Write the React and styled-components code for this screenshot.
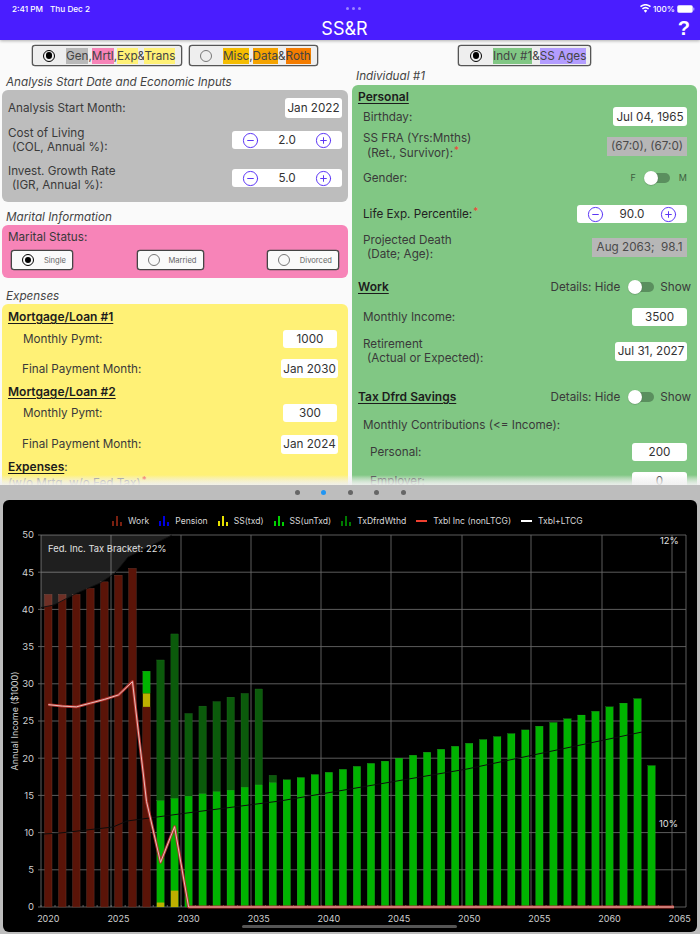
import React from "react";
import styled, { createGlobalStyle } from "styled-components";
import { CircleMinus, CirclePlus } from "lucide-react";

const Global = createGlobalStyle`
  html, body { margin: 0; padding: 0; background: #fafafa; }
  body { font-family: Inter, "Liberation Sans", sans-serif; }
  * { box-sizing: border-box; }
`;

const Page = styled.div`
  width: 700px; height: 934px; overflow: hidden; display: flex; flex-direction: column; background: #fafafa;
`;
const Header = styled.header`
  height: 40px; flex: none; background: #4a1dff; color: #fff; position: relative; z-index: 2;
  box-shadow: 0 1px 3px rgba(0,0,0,.3); display: flex; flex-direction: column;
`;
const StatusBar = styled.div`
  height: 17px; display: flex; align-items: center; justify-content: space-between; padding: 0 5px 0 12px;
  font-size: 8.2px; font-weight: 500;
`;
const StatusLeft = styled.div`display: flex; gap: 7px; width: 120px;`;
const StatusRight = styled.div`display: flex; align-items: center; gap: 2px; width: 120px; justify-content: flex-end;`;
const Grip = styled.div`display: flex; gap: 3px;`;
const GripDot = styled.i`width: 3px; height: 3px; border-radius: 50%; background: #9c86ff;`;
const TitleBar = styled.div`
  flex: 1; display: flex; align-items: center; justify-content: center; position: relative; margin-top: -1px; padding-right: 11px;
  font-size: 18px; font-weight: 400;
`;
const Help = styled.span`
  position: absolute; right: 10px; top: 0px; font-size: 20px; line-height: 24px; font-weight: 800; font-family: "Liberation Sans", sans-serif;
`;
const Top = styled.div`
  height: 445px; flex: none; display: flex; position: relative; overflow: hidden;
`;
const Fade = styled.div`
  position: absolute; left: 0; right: 0; bottom: 0; height: 10px;
  background: linear-gradient(rgba(250,250,250,0), rgba(240,240,240,.75));
`;
const Column = styled.div`
  width: 350px; flex: none; padding: 5px ${p => p.$right ? "3px" : "2px"} 0 2px; display: flex; flex-direction: column;
`;
const TabGroup = styled.div`display: flex; justify-content: center; gap: 7px;`;
const Tab = styled.div`
  height: 21px; width: ${p => p.$w}px; border: 1px solid #555; border-radius: 3px; background: #eee;
  box-shadow: 0 0 0 .3px #555; display: flex; align-items: center; padding-left: ${p => p.$pl}px; font-size: 11.7px; color: #444;
`;
const Radio = styled.span`
  width: 12px; height: 12px; border-radius: 50%; flex: none; position: relative;
  border: ${p => p.$on ? "1.7px solid #000" : "1.3px solid #777"};
  &::after { content: ""; display: ${p => p.$on ? "block" : "none"}; position: absolute; inset: 1.7px; border-radius: 50%; background: #000; }
`;
const Swatch = styled.span`background: ${p => p.$c}; padding: 1px 0; line-height: 13px;`;
const TabLabel = styled.span`margin-left: ${p => p.$ml}px; white-space: nowrap;`;
const Caption = styled.div`
  font-style: italic; font-size: 11.7px; line-height: 16px; height: 16px; color: #444; padding-left: 4px;
  margin-top: ${p => p.$mt || 0}px; margin-bottom: ${p => p.$mb || 0}px; white-space: nowrap;
`;
const Panel = styled.section`
  background: ${p => p.$bg}; border-radius: 6px; padding: ${p => p.$pt}px 0 ${p => p.$pb || 0}px;
  color: #3a3a3a; font-size: 11.7px; flex: none;
`;
const Row = styled.div`
  height: ${p => p.$h}px; margin-top: ${p => p.$mt || 0}px; display: flex; align-items: center; justify-content: space-between;
  padding: 0 ${p => p.$pr ?? 6}px 0 ${p => p.$pl ?? 6}px; white-space: nowrap; line-height: ${p => p.$lh || 14}px;
  color: ${p => p.$c || "inherit"};
`;
const Sub = styled.span`display: block; padding-left: 4px;`;
const Head = styled.span`
  font-weight: 600; text-decoration: underline; text-underline-offset: 2px; color: #1c1c1c; font-size: 12px;
`;
const Value = styled.span`
  background: ${p => p.$gray ? "#b7b7b7" : "#fff"}; height: ${p => p.$tall || 19}px; width: ${p => p.$w}px; flex: none;
  border-radius: ${p => p.$gray ? 0 : 3}px; display: flex; align-items: center; justify-content: center;
  margin-right: ${p => p.$mr || 0}px; color: ${p => p.$gray ? "#4a4a4a" : "#333"};
`;
const Stepper = styled.div`
  width: 110px; height: 18px; background: #fff; border-radius: 3px; display: flex; align-items: center; justify-content: space-between;
  padding: 0 10px; color: #333; flex: none;
`;
const StepIcon = styled.span`color: #5a35f5; display: flex;`;
const Star = styled.sup`color: #f44336; font-size: 10px; line-height: 0; vertical-align: 3px; margin-left: 1px;`;
const Choices = styled.div`display: flex; justify-content: space-between; padding: 5px 9px 0 9px;`;
const Choice = styled.div`
  width: ${p => p.$w}px; height: 20px; border: 1px solid #444; box-shadow: 0 0 0 .3px #444; border-radius: 3px; background: #fafafa;
  display: flex; align-items: center; justify-content: space-between; padding: 0 6px 0 ${p => p.$pl}px; font-size: 7.6px; color: #666;
`;
const ToggleWrap = styled.div`display: flex; align-items: center; color: ${p => p.$c || "inherit"}; font-size: ${p => p.$fs || 11.7}px;`;
const Track = styled.span`
  width: 25px; height: 10px; border-radius: 5px; background: #5a8f5e; position: relative; margin: 0 ${p => p.$mr}px 0 ${p => p.$ml}px; flex: none;
  &::after { content: ""; position: absolute; left: -1px; top: -2.5px; width: 14px; height: 14px; border-radius: 50%; background: #fff; box-shadow: 0 .5px 1px rgba(0,0,0,.3); }
`;
const Bottom = styled.div`
  flex: 1; background: #bdbdbd; display: flex; flex-direction: column; align-items: stretch;
`;
const Dots = styled.div`height: 15px; display: flex; justify-content: center; align-items: center; gap: 21.5px; flex: none; padding-top: 0;`;
const Dot = styled.i`width: 5px; height: 5px; border-radius: 50%; background: ${p => p.$on ? "#2196f3" : "#666"};`;
const Card = styled.div`
  height: 432px; margin: 0 3px; background: #000; border-radius: 6px; position: relative; display: flex; flex-direction: column; flex: none;
`;
const Legend = styled.div`
  height: 28px; flex: none; padding: 14px 0 0 109px; display: flex; align-items: center; font-size: 8.6px; color: #d8d8d8; white-space: nowrap;
`;
const LegendItem = styled.div`display: flex; align-items: center; gap: 6px; margin-right: ${p => p.$mr}px;`;
const Chart = styled.svg`display: block; flex: none;`;
const ScrollBar = styled.div`
  position: absolute; left: 239px; bottom: 4px; width: 215px; height: 3px; border-radius: 2px; background: #555;
`;

const Bars = ({ c }) => (
  <svg width="10" height="10" viewBox="0 0 10 10">
    <rect x="0" y="5" width="2" height="5" fill={c} /><rect x="4" y="0" width="2" height="10" fill={c} /><rect x="8" y="6" width="2" height="4" fill={c} />
  </svg>
);
const Dash = ({ c }) => (<svg width="11" height="4" viewBox="0 0 11 4"><rect y="1" width="11" height="2" fill={c} /></svg>);

const X0 = 48.3, DX = 14.03, Y0 = 907, DY = 7.44, BW = 7.4;
const yv = v => Y0 - v * DY;
const xv = yr => X0 + (yr - 2020) * DX;

const WORK = [42, 42, 42, 42.8, 43.7, 44.6, 45.5, 26.9];
const GREEN = [
  [2027, 28.7, 31.7, 28.7], [2028, 0.6, 14.3, 33.2], [2029, 2.2, 14.6, 36.7], [2030, 0, 14.9, 26], [2031, 0, 15.2, 27], [2032, 0, 15.5, 27.6],
  [2033, 0, 15.7, 28.2], [2034, 0, 16.1, 28.7], [2035, 0, 16.4, 29.3], [2036, 0, 16.7, 17.7],
  ...[17.1, 17.4, 17.8, 18.1, 18.5, 18.9, 19.3, 19.6, 20, 20.4, 20.8, 21.2, 21.6, 22, 22.5, 22.9, 23.3, 23.8, 24.3, 24.8, 25.3, 25.8, 26.3, 26.9, 27.4, 28, 19]
    .map((v, i) => [2037 + i, 0, v, 0]),
];
const RED = [[2020, 27.2], [2021, 27], [2022, 26.9], [2023, 27.4], [2024, 27.9], [2025, 28.5], [2026, 30.3], [2027, 14.2], [2028, 6], [2029, 10.8], [2030, 0], [2064.6, 0]];
const redPts = RED.map(([y, v]) => `${xv(y)},${yv(v)}`).join(" ");
const tenPts = "44,834 60,833 113,827 127,821 187,813 280,801 467,769 642,732";
const brPath = "M41,607.5 C52,606 60,603 77,593 L100,583 L115,573 L128,557 L172,535 L41,535 Z";

function IncomeChart() {
  const gx = [41, 111, 181, 251, 321, 391, 462, 531, 602, 672, 686];
  const years = [2020, 2025, 2030, 2035, 2040, 2045, 2050, 2055, 2060, 2065];
  return (
    <Chart width="694" height="404" viewBox="3 528 694 404">
      {gx.map(x => <line key={x} x1={x} x2={x} y1={535} y2={907} stroke="#666" strokeWidth=".9" />)}
      {[0, 5, 10, 15, 20, 25, 30, 35, 40, 45, 50].map(v => (
        <g key={v}>
          <line x1={38} x2={686} y1={yv(v)} y2={yv(v)} stroke="#666" strokeWidth=".9" />
          <text x={34} y={yv(v) + 3.3} textAnchor="end" fontSize="9.5" fill="#cfcfcf">{v}</text>
        </g>
      ))}
      {Array.from({ length: 46 }, (_, i) => <line key={i} x1={41 + i * 14.03} x2={41 + i * 14.03} y1={905} y2={907} stroke="#777" strokeWidth=".8" />)}
      {WORK.map((v, i) => (
        <rect key={i} x={xv(2020 + i) - BW / 2} y={yv(v)} width={BW} height={v * DY} fill="#5a1408" stroke="#7a4034" strokeWidth=".4" />
      ))}
      {GREEN.map(([y, a, b, c]) => (
        <g key={y}>
          {c > b && <rect x={xv(y) - BW / 2} y={yv(c)} width={BW} height={(c - b) * DY} fill="#0b5a0b" stroke="#2a7a2a" strokeWidth=".3" />}
          {c === 0 || b > a ? <rect x={xv(y) - BW / 2} y={yv(b)} width={BW} height={(b - (y === 2027 ? a : 0)) * DY} fill="#00b300" stroke="#3fbf3f" strokeWidth=".2" /> : null}
          {y === 2027 && <rect x={xv(y) - BW / 2} y={yv(28.7)} width={BW} height={1.8 * DY} fill="#bdb000" />}
          {y !== 2027 && a > 0 && <rect x={xv(y) - BW / 2} y={yv(a)} width={BW} height={a * DY} fill="#bdb000" />}
        </g>
      ))}
      <path d={brPath} fill="rgba(255,255,255,.12)" />
      <polyline points="41,607.5 54,605 77,593 100,583 115,573 128,557 172,535" fill="none" stroke="#111" strokeWidth=".9" />
      <polyline points={tenPts} fill="none" stroke="#0c0c0c" strokeWidth="1" />
      <polyline points={redPts} fill="none" stroke="#b5322c" strokeWidth="2.8" strokeLinejoin="round" />
      <polyline points={redPts} fill="none" stroke="#e6c0bc" strokeWidth="1" strokeLinejoin="round" />
      {years.map(y => (
        <text key={y} x={xv(y)} y={921.5} textAnchor="middle" fontSize="9" fill="#cfcfcf">{y}</text>
      ))}
      <text transform="translate(18 721) rotate(-90)" textAnchor="middle" fontSize="9" fill="#d0d0d0">Annual Income ($1000)</text>
      <text x="48" y="551.5" fontSize="9.4" fill="#e0e0e0">Fed. Inc. Tax Bracket: 22%</text>
      <text x="660" y="544" fontSize="9.4" fill="#e0e0e0">12%</text>
      <text x="659" y="827" fontSize="9.4" fill="#e0e0e0">10%</text>
    </Chart>
  );
}

const Step = ({ v }) => (
  <Stepper>
    <StepIcon><CircleMinus size={17} strokeWidth={1.4} /></StepIcon>
    <span>{v}</span>
    <StepIcon><CirclePlus size={17} strokeWidth={1.4} /></StepIcon>
  </Stepper>
);

const Details = () => (
  <ToggleWrap>Details: Hide<Track $ml={9} $mr={6} />Show</ToggleWrap>
);

export default function App() {
  return (
    <Page>
      <Global />
      <Header>
        <StatusBar>
          <StatusLeft><span>2:41 PM</span><span>Thu Dec 2</span></StatusLeft>
          <Grip><GripDot /><GripDot /><GripDot /></Grip>
          <StatusRight>
            <svg width="11" height="9" viewBox="0 0 22 17" fill="#fff"><path d="M11 17l3.4-4.2a5 5 0 0 0-6.8 0zM5.8 10.6a8 8 0 0 1 10.4 0l2-2.4a11 11 0 0 0-14.4 0zM2 6a13.5 13.5 0 0 1 18 0l2-2.4A16.5 16.5 0 0 0 0 3.6z" /></svg>
            <span>100%</span>
            <svg width="18" height="8" viewBox="0 0 18 8"><rect x=".3" y=".3" width="15.4" height="7.4" rx="2" fill="#fff" stroke="#cfc6ff" strokeWidth=".5" /><rect x="16.3" y="2.5" width="1" height="3" rx=".5" fill="#bfb3ff" /></svg>
          </StatusRight>
        </StatusBar>
        <TitleBar>SS&amp;R<Help>?</Help></TitleBar>
      </Header>
      <Top>
        <Column>
          <TabGroup>
            <Tab $w={150} $pl={10}>
              <Radio $on />
              <TabLabel $ml={11}><Swatch $c="#b9b9b9">Gen</Swatch>,<Swatch $c="#f784b8">Mrtl</Swatch>,<Swatch $c="#fff176">Exp</Swatch>&amp;<Swatch $c="#fff176">Trans</Swatch></TabLabel>
            </Tab>
            <Tab $w={129} $pl={10}>
              <Radio />
              <TabLabel $ml={11}><Swatch $c="#f5bd02">Misc</Swatch>,<Swatch $c="#f5a300">Data</Swatch>&amp;<Swatch $c="#f57c00">Roth</Swatch></TabLabel>
            </Tab>
          </TabGroup>
          <Caption $mt={8}>Analysis Start Date and Economic Inputs</Caption>
          <Panel $bg="#bdbdbd" $pt={8} $pb={5}>
            <Row $h={20}>Analysis Start Month:<Value $w={57} $tall={20}>Jan 2022</Value></Row>
            <Row $h={38} $mt={3}><span>Cost of Living<Sub>(COL, Annual %):</Sub></span><Step v="2.0" /></Row>
            <Row $h={38}><span>Invest. Growth Rate<Sub>(IGR, Annual %):</Sub></span><Step v="5.0" /></Row>
          </Panel>
          <Caption $mt={7}>Marital Information</Caption>
          <Panel $bg="#f784b8" $pt={4} $pb={8}>
            <Row $h={16}>Marital Status:</Row>
            <Choices>
              <Choice $w={62} $pl={10}><Radio $on />Single</Choice>
              <Choice $w={67} $pl={10}><Radio />Married</Choice>
              <Choice $w={72} $pl={10}><Radio />Divorced</Choice>
            </Choices>
          </Panel>
          <Caption $mt={10}>Expenses</Caption>
          <Panel $bg="#fff176" $pt={5}>
            <Row $h={16}><Head>Mortgage/Loan #1</Head></Row>
            <Row $h={27} $pl={21} $pr={11}>Monthly Pymt:<Value $w={54} $tall={18}>1000</Value></Row>
            <Row $h={33} $pl={20} $pr={10}>Final Payment Month:<Value $w={57}>Jan 2030</Value></Row>
            <Row $h={14}><Head>Mortgage/Loan #2</Head></Row>
            <Row $h={28} $pl={21} $pr={11}>Monthly Pymt:<Value $w={54} $tall={18}>300</Value></Row>
            <Row $h={34} $pl={20} $pr={10}>Final Payment Month:<Value $w={57}>Jan 2024</Value></Row>
            <Row $h={12}><span><Head>Expenses</Head>:</span></Row>
            <Row $h={20} $c="#777"><span>(w/o Mrtg, w/o Fed Tax)<Star>*</Star></span></Row>
          </Panel>
          <Fade />
        </Column>
        <Column $right>
          <TabGroup>
            <Tab $w={133} $pl={11}>
              <Radio $on />
              <TabLabel $ml={11}><Swatch $c="#81c784">Indv #1</Swatch>&amp;<Swatch $c="#b39dff">SS Ages</Swatch></TabLabel>
            </Tab>
          </TabGroup>
          <Caption $mt={2} $mb={1}>Individual #1</Caption>
          <Panel $bg="#81c784" $pt={4}>
            <Row $h={16}><Head>Personal</Head></Row>
            <Row $h={23} $pl={11} $pr={10}>Birthday:<Value $w={74}>Jul 04, 1965</Value></Row>
            <Row $h={36} $pl={11} $pr={10} $lh={15}><span>SS FRA (Yrs:Mnths)<Sub>(Ret., Survivor):<Star>*</Star></Sub></span><Value $gray $w={80}>(67:0), (67:0)</Value></Row>
            <Row $h={28} $pl={11} $pr={10}>Gender:<ToggleWrap $fs={9} $c="#3d5d40">F<Track $ml={9} $mr={9} />M</ToggleWrap></Row>
            <Row $h={44} $pl={11} $pr={10} $c="#222"><span>Life Exp. Percentile:<Star>*</Star></span><Step v="90.0" /></Row>
            <Row $h={22} $pl={11} $pr={10}><span>Projected Death<Sub>(Date; Age):</Sub></span><Value $gray $w={95}>Aug 2063;&nbsp;&nbsp;98.1</Value></Row>
            <Row $h={20} $mt={19}><Head>Work</Head><Details /></Row>
            <Row $h={40} $pl={11} $pr={10}>Monthly Income:<Value $w={55} $tall={18}>3500</Value></Row>
            <Row $h={28} $pl={11} $pr={10}><span>Retirement<Sub>(Actual or Expected):</Sub></span><Value $w={72}>Jul 31, 2027</Value></Row>
            <Row $h={20} $mt={22}><Head>Tax Dfrd Savings</Head><Details /></Row>
            <Row $h={36} $pl={11} $pr={10}>Monthly Contributions (&lt;= Income):</Row>
            <Row $h={18} $pl={18} $pr={10}>Personal:<Value $w={55} $tall={18}>200</Value></Row>
            <Row $h={40} $pl={18} $pr={10}>Employer:<Value $w={55} $tall={18}>0</Value></Row>
          </Panel>
          <Fade />
        </Column>
      </Top>
      <Bottom>
        <Dots><Dot /><Dot $on /><Dot /><Dot /><Dot /></Dots>
        <Card>
          <Legend>
            <LegendItem $mr={10}><Bars c="#7a2010" />Work</LegendItem>
            <LegendItem $mr={10}><Bars c="#0000e0" />Pension</LegendItem>
            <LegendItem $mr={10}><Bars c="#e6e000" />SS(txd)</LegendItem>
            <LegendItem $mr={10}><Bars c="#00d000" />SS(unTxd)</LegendItem>
            <LegendItem $mr={10}><Bars c="#007a00" />TxDfrdWthd</LegendItem>
            <LegendItem $mr={10}><Dash c="#f04030" />Txbl Inc (nonLTCG)</LegendItem>
            <LegendItem $mr={0}><Dash c="#fff" />Txbl+LTCG</LegendItem>
          </Legend>
          <IncomeChart />
          <ScrollBar />
        </Card>
      </Bottom>
    </Page>
  );
}
